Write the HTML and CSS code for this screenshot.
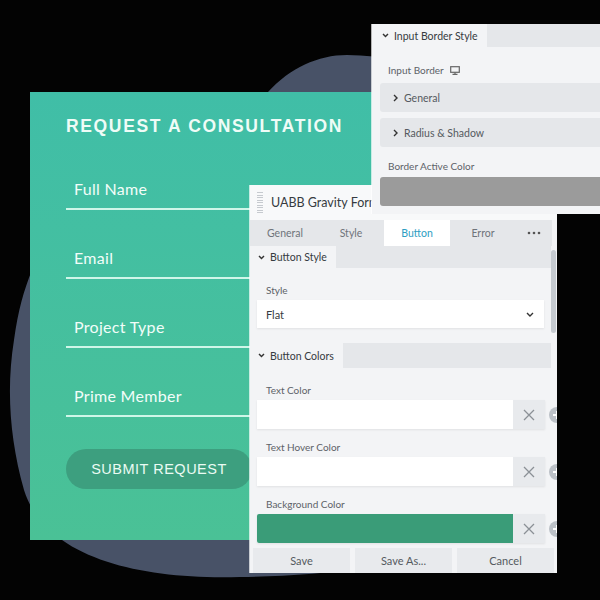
FILE: index.html
```html
<!DOCTYPE html>
<html lang="en">
<head>
    <meta charset="UTF-8">
    <meta name="viewport" content="width=device-width, initial-scale=1.0">
    <title>Request a Consultation</title>
    <link rel="stylesheet" href="styles.css">
</head>
<body>
<div class="stage">

    <!-- background shape -->
    <svg class="blob" width="600" height="600" viewBox="0 0 600 600">
        <path d="M268 92 C290 68 318 55 347 55 C420 55 470 90 500 150 L520 540 C420 565 320 576 240 577 C140 580 45 558 24 490 C10 440 6 390 14 340 C18 310 24 290 32 270 L40 250 Z" fill="#485267"/>
    </svg>

    <section class="card">
        <h1 class="card-title">REQUEST A CONSULTATION</h1>
        <div class="field">Full Name</div>
        <div class="field">Email</div>
        <div class="field">Project Type</div>
        <div class="field">Prime Member</div>
        <button class="submit">SUBMIT REQUEST</button>
    </section>

    <section class="panel settings">
        <header class="panel-head">
            <span class="grip"></span>
            <span class="panel-title">UABB Gravity Form</span>
        </header>

        <nav class="tabs">
            <span class="tab">General</span>
            <span class="tab">Style</span>
            <span class="tab active">Button</span>
            <span class="tab">Error</span>
            <span class="tab more">
                <svg width="14" height="4" viewBox="0 0 14 4"><circle cx="2" cy="2" r="1.3" fill="#555"/><circle cx="7" cy="2" r="1.3" fill="#555"/><circle cx="12" cy="2" r="1.3" fill="#555"/></svg>
            </span>
        </nav>

        <div class="panel-body">
            <div class="section-row">
                <span class="section-tab w86">
                    <svg class="chev" width="7" height="5" viewBox="0 0 7 5"><path d="M1 1 L3.5 3.6 L6 1" fill="none" stroke="#333" stroke-width="1.4"/></svg>
                    Button Style
                </span>
            </div>

            <div class="group">
                <div class="label">Style</div>
                <div class="select">
                    <span>Flat</span>
                    <svg width="8" height="5" viewBox="0 0 8 5"><path d="M1 1 L4 4 L7 1" fill="none" stroke="#333" stroke-width="1.4"/></svg>
                </div>
            </div>

            <div class="section-row tall">
                <span class="section-tab w93">
                    <svg class="chev" width="7" height="5" viewBox="0 0 7 5"><path d="M1 1 L3.5 3.6 L6 1" fill="none" stroke="#333" stroke-width="1.4"/></svg>
                    Button Colors
                </span>
            </div>

            <div class="group">
                <div class="color-field">
                    <div class="label">Text Color</div>
                    <div class="color-row">
                        <div class="color-input">
                            <span class="swatch"></span>
                            <span class="clear"><svg width="12" height="12" viewBox="0 0 12 12"><path d="M1 1 L11 11 M11 1 L1 11" stroke="#8b9096" stroke-width="1.3"/></svg></span>
                        </div>
                        <span class="add"><svg width="16" height="16" viewBox="0 0 16 16"><circle cx="8" cy="8" r="8" fill="#bcc1c7"/><path d="M4 8 H12 M8 4 V12" stroke="#fff" stroke-width="2"/></svg></span>
                    </div>
                </div>
                <div class="color-field">
                    <div class="label">Text Hover Color</div>
                    <div class="color-row">
                        <div class="color-input">
                            <span class="swatch"></span>
                            <span class="clear"><svg width="12" height="12" viewBox="0 0 12 12"><path d="M1 1 L11 11 M11 1 L1 11" stroke="#8b9096" stroke-width="1.3"/></svg></span>
                        </div>
                        <span class="add"><svg width="16" height="16" viewBox="0 0 16 16"><circle cx="8" cy="8" r="8" fill="#bcc1c7"/><path d="M4 8 H12 M8 4 V12" stroke="#fff" stroke-width="2"/></svg></span>
                    </div>
                </div>
                <div class="color-field">
                    <div class="label">Background Color</div>
                    <div class="color-row">
                        <div class="color-input">
                            <span class="swatch green"></span>
                            <span class="clear"><svg width="12" height="12" viewBox="0 0 12 12"><path d="M1 1 L11 11 M11 1 L1 11" stroke="#8b9096" stroke-width="1.3"/></svg></span>
                        </div>
                        <span class="add"><svg width="16" height="16" viewBox="0 0 16 16"><circle cx="8" cy="8" r="8" fill="#bcc1c7"/><path d="M4 8 H12 M8 4 V12" stroke="#fff" stroke-width="2"/></svg></span>
                    </div>
                </div>
            </div>

            <span class="scrollbar"></span>
        </div>

        <footer class="panel-foot">
            <button>Save</button>
            <button>Save As...</button>
            <button>Cancel</button>
        </footer>
    </section>

    <section class="panel border-panel">
        <div class="section-row small">
            <span class="section-tab w115">
                <svg class="chev" width="7" height="5" viewBox="0 0 7 5"><path d="M1 1 L3.5 3.6 L6 1" fill="none" stroke="#333" stroke-width="1.4"/></svg>
                Input Border Style
            </span>
        </div>

        <div class="bp-label">
            Input Border
            <svg width="10" height="9" viewBox="0 0 10 9"><rect x="0.7" y="0.7" width="8.6" height="5.6" fill="none" stroke="#666" stroke-width="1.2"/><path d="M5 6.5 V8 M2.5 8.4 H7.5" stroke="#666" stroke-width="1.2"/></svg>
        </div>

        <div class="toggle">
            <svg width="5" height="8" viewBox="0 0 5 8"><path d="M1 1 L4 4 L1 7" fill="none" stroke="#333" stroke-width="1.4"/></svg>
            General
        </div>
        <div class="toggle">
            <svg width="5" height="8" viewBox="0 0 5 8"><path d="M1 1 L4 4 L1 7" fill="none" stroke="#333" stroke-width="1.4"/></svg>
            Radius &amp; Shadow
        </div>

        <div class="bp-label spaced">Border Active Color</div>
        <div class="active-color"></div>
    </section>

</div>
</body>
</html>
```

FILE: styles.css
```css
:root {
    --page-bg: #030303;
    --card-top: #40bea7;
    --card-bottom: #4ac196;
    --panel-bg: #f3f4f6;
    --row-bg: #e5e7ea;
    --text-dark: #363b41;
    --text-muted: #5d6268;
    --accent: #2d9ec2;
}

body {
    margin: 0;
    background: var(--page-bg);
}

.stage {
    position: relative;
    width: 600px;
    height: 600px;
    overflow: hidden;
    font-family: "Lato", "Noto Sans", sans-serif;
}

.blob {
    position: absolute;
    left: 0;
    top: 0;
}

/* Consultation card */
.card {
    position: absolute;
    left: 30px;
    top: 92px;
    width: 400px;
    height: 448px;
    box-sizing: border-box;
    padding: 22px 0 0 36px;
    background: linear-gradient(180deg, var(--card-top), var(--card-bottom));
}

.card-title {
    margin: 0 0 41px;
    font: bold 17.5px/24px "Liberation Sans", Arial, sans-serif;
    letter-spacing: 1.65px;
    color: #effcf7;
}

.field {
    width: 300px;
    box-sizing: border-box;
    padding: 0 0 9px 8px;
    border-bottom: 2px solid rgba(232, 255, 246, 0.85);
    font-size: 16px;
    line-height: 20px;
    letter-spacing: 0.3px;
    color: #f2fdf9;
}

.field + .field {
    margin-top: 38px;
}

.submit {
    display: block;
    margin-top: 32px;
    width: 186px;
    height: 40px;
    padding: 0;
    border: none;
    border-radius: 20px;
    background: #3d9f7f;
    color: #eafbf3;
    font: 14.5px "Liberation Sans", Arial, sans-serif;
    letter-spacing: 0.5px;
}

/* Settings panels */
.panel {
    position: absolute;
    background: var(--panel-bg);
    box-shadow: -1px 0 0 rgba(255, 255, 255, 0.7);
    color: var(--text-muted);
}

.settings {
    left: 250px;
    top: 185px;
    width: 307px;
    height: 388px;
    display: flex;
    flex-direction: column;
    z-index: 2;
}

.border-panel {
    left: 372px;
    top: 24px;
    width: 240px;
    height: 190px;
    z-index: 3;
}

.panel-head {
    flex: none;
    height: 35px;
    display: flex;
    align-items: center;
    gap: 8px;
    padding-left: 7px;
    background: #f8f9fa;
}

.grip {
    width: 6px;
    height: 22px;
    background: repeating-linear-gradient(180deg, #c6cacf 0 1px, transparent 1px 2.5px);
}

.panel-title {
    font-size: 12.5px;
    color: var(--text-dark);
    white-space: nowrap;
}

.tabs {
    flex: none;
    display: flex;
    height: 26px;
    margin-right: 5px;
    padding-left: 2px;
    background: var(--row-bg);
}

.tab {
    width: 66px;
    display: flex;
    align-items: center;
    justify-content: center;
    font-size: 10.5px;
    color: #6f747a;
}

.tab.active {
    background: #fff;
    color: var(--accent);
}

.tab.more {
    width: 36px;
}

.panel-body {
    position: relative;
    flex: 1;
    overflow: hidden;
}

.section-row {
    display: flex;
    height: 22px;
    margin-right: 6px;
    background: var(--row-bg);
}

.section-row.tall {
    height: 25px;
}

.section-row.small {
    height: 23px;
    margin-right: 0;
}

.section-tab {
    display: flex;
    align-items: center;
    gap: 5px;
    box-sizing: border-box;
    padding-left: 8px;
    background: var(--panel-bg);
    font-size: 10.5px;
    color: var(--text-dark);
    white-space: nowrap;
}

.w86 { width: 86px; }
.w93 { width: 93px; }
.w115 { width: 115px; padding-left: 10px; }

.group {
    padding: 15px 0 15px 7px;
}

.label {
    padding-left: 9px;
    font-size: 10px;
    line-height: 14px;
    margin-bottom: 3px;
    color: var(--text-muted);
}

.select {
    width: 287px;
    height: 28px;
    display: flex;
    align-items: center;
    justify-content: space-between;
    box-sizing: border-box;
    padding: 0 10px 0 9px;
    background: #fff;
    box-shadow: 0 1px 2px rgba(0, 0, 0, 0.08);
    font-size: 11px;
    color: var(--text-dark);
}

.color-field + .color-field {
    margin-top: 11px;
}

.color-row {
    display: flex;
    align-items: center;
    gap: 4px;
}

.color-input {
    display: flex;
    flex: none;
    width: 288px;
    height: 29px;
    box-shadow: 0 1px 2px rgba(0, 0, 0, 0.08);
}

.swatch {
    flex: 1;
    background: #fff;
}

.swatch.green {
    background: #3a9c78;
    border-radius: 2px 0 0 2px;
}

.clear {
    width: 32px;
    display: flex;
    align-items: center;
    justify-content: center;
    background: #e8eaed;
}

.add {
    flex: none;
    display: flex;
}

.scrollbar {
    position: absolute;
    right: 1px;
    top: 4px;
    width: 5px;
    height: 83px;
    border-radius: 3px;
    background: #c5cad0;
}

.panel-foot {
    flex: none;
    display: flex;
    gap: 5px;
    height: 25px;
    padding: 0 3px;
}

.panel-foot button {
    flex: 1;
    padding: 0;
    border: none;
    background: #e8eaed;
    font: 11px "Lato", "Noto Sans", sans-serif;
    color: #555a60;
}

/* Input border panel */
.bp-label {
    display: flex;
    align-items: center;
    gap: 6px;
    padding: 16px 0 0 16px;
    font-size: 10px;
    line-height: 14px;
}

.bp-label.spaced {
    padding-top: 12px;
}

.toggle {
    display: flex;
    align-items: center;
    gap: 6px;
    height: 29px;
    margin: 6px 0 0 8px;
    padding-left: 13px;
    border-radius: 3px;
    background: var(--row-bg);
    font-size: 10.5px;
    color: #555a60;
}

.active-color {
    height: 29px;
    margin: 4px 0 0 8px;
    border-radius: 3px;
    background: #9b9b9b;
}
```
